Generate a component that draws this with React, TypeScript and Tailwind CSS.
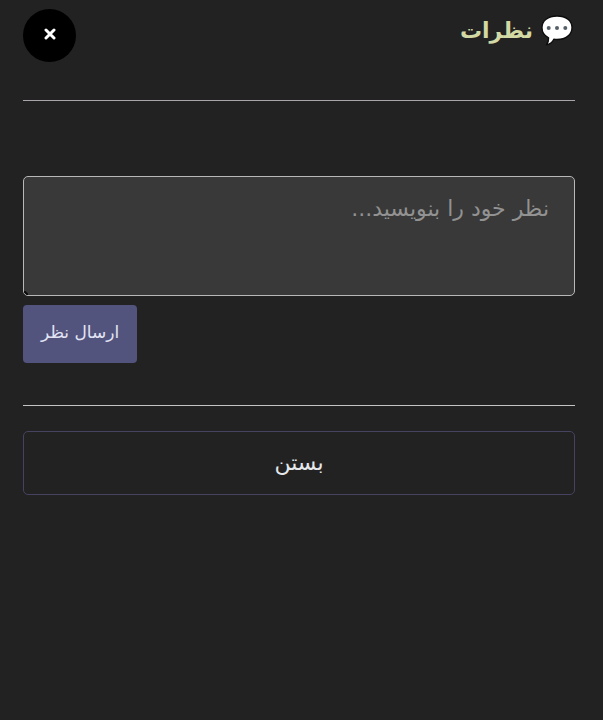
import { useState } from "react";

function SpeechBubble() {
  return (
    <svg width="34" height="32" viewBox="0 0 34 32" aria-hidden="true">
      <path
        d="M16 1C7 1 1 5.700 1 12.500c0 4.800 2.600 8.400 6.600 10.300.2 2.500-.5 4.700-2.100 7 3.400-.7 5.900-2.700 7.300-5.600 1 .2 2.100.3 3.200.3 9 0 15-5 15-12S25 1 16 1Z"
        fill="#fff"
        stroke="#0c0c0c"
        strokeWidth="1.300"
        strokeLinejoin="round"
      />
      <circle cx="7.700" cy="13" r="2" fill="#556067" />
      <circle cx="16" cy="13" r="2" fill="#556067" />
      <circle cx="24.300" cy="13" r="2" fill="#556067" />
    </svg>
  );
}

export default function App() {
  const [comment, setComment] = useState("");

  return (
    <div
      dir="rtl"
      lang="fa"
      className="min-h-screen bg-[#222222] pt-[9px] pl-[23px] pr-7 font-['DejaVu_Sans',sans-serif] text-gray-200"
    >
      <header className="flex items-start justify-between border-b border-[#aaa5aa] pb-[38px]">
        <h1 className="flex items-center gap-2 pt-1 text-[22px] leading-9 font-bold text-[#d2d9a4]">
          <SpeechBubble />
          نظرات
        </h1>
        <button
          type="button"
          aria-label="بستن پنجره"
          className="flex size-[53px] items-center justify-center rounded-full bg-black pb-1 text-white"
        >
          <svg width="12" height="12" viewBox="0 0 12 12" aria-hidden="true">
            <path
              d="M2 2l8 8M10 2l-8 8"
              stroke="currentColor"
              strokeWidth="3"
              strokeLinecap="round"
            />
          </svg>
        </button>
      </header>

      <form
        onSubmit={(e) => e.preventDefault()}
        className="flex flex-col items-end gap-[9px] border-b border-[#c4c4c4] pt-[75px] pb-[42px]"
      >
        <div className="relative w-full">
          <textarea
            value={comment}
            onChange={(e) => setComment(e.target.value)}
            aria-label="نظر خود را بنویسید"
            placeholder="نظر خود را بنویسید..."
            className="block h-30 w-full resize-none rounded-[5px] border border-[#b8b8b8] bg-[#393939] px-[25px] py-4 text-[22px] leading-8 placeholder:text-[#929292] focus:outline-none"
          />
          <svg
            width="4"
            height="4"
            viewBox="0 0 4 4"
            aria-hidden="true"
            className="absolute bottom-px left-px"
          >
            <path d="M0 0l4 4" stroke="#0c0c0c" strokeWidth="2" />
          </svg>
        </div>
        <button
          type="submit"
          className="h-[58px] rounded bg-[#53547e] px-[18px] pb-1 text-[17px] leading-7 text-[#e2e4f4]"
        >
          ارسال نظر
        </button>
      </form>

      <button
        type="button"
        className="mt-[25px] h-16 w-full rounded-[5px] border border-[#454360] text-[22px] leading-8"
      >
        بستن
      </button>
    </div>
  );
}
